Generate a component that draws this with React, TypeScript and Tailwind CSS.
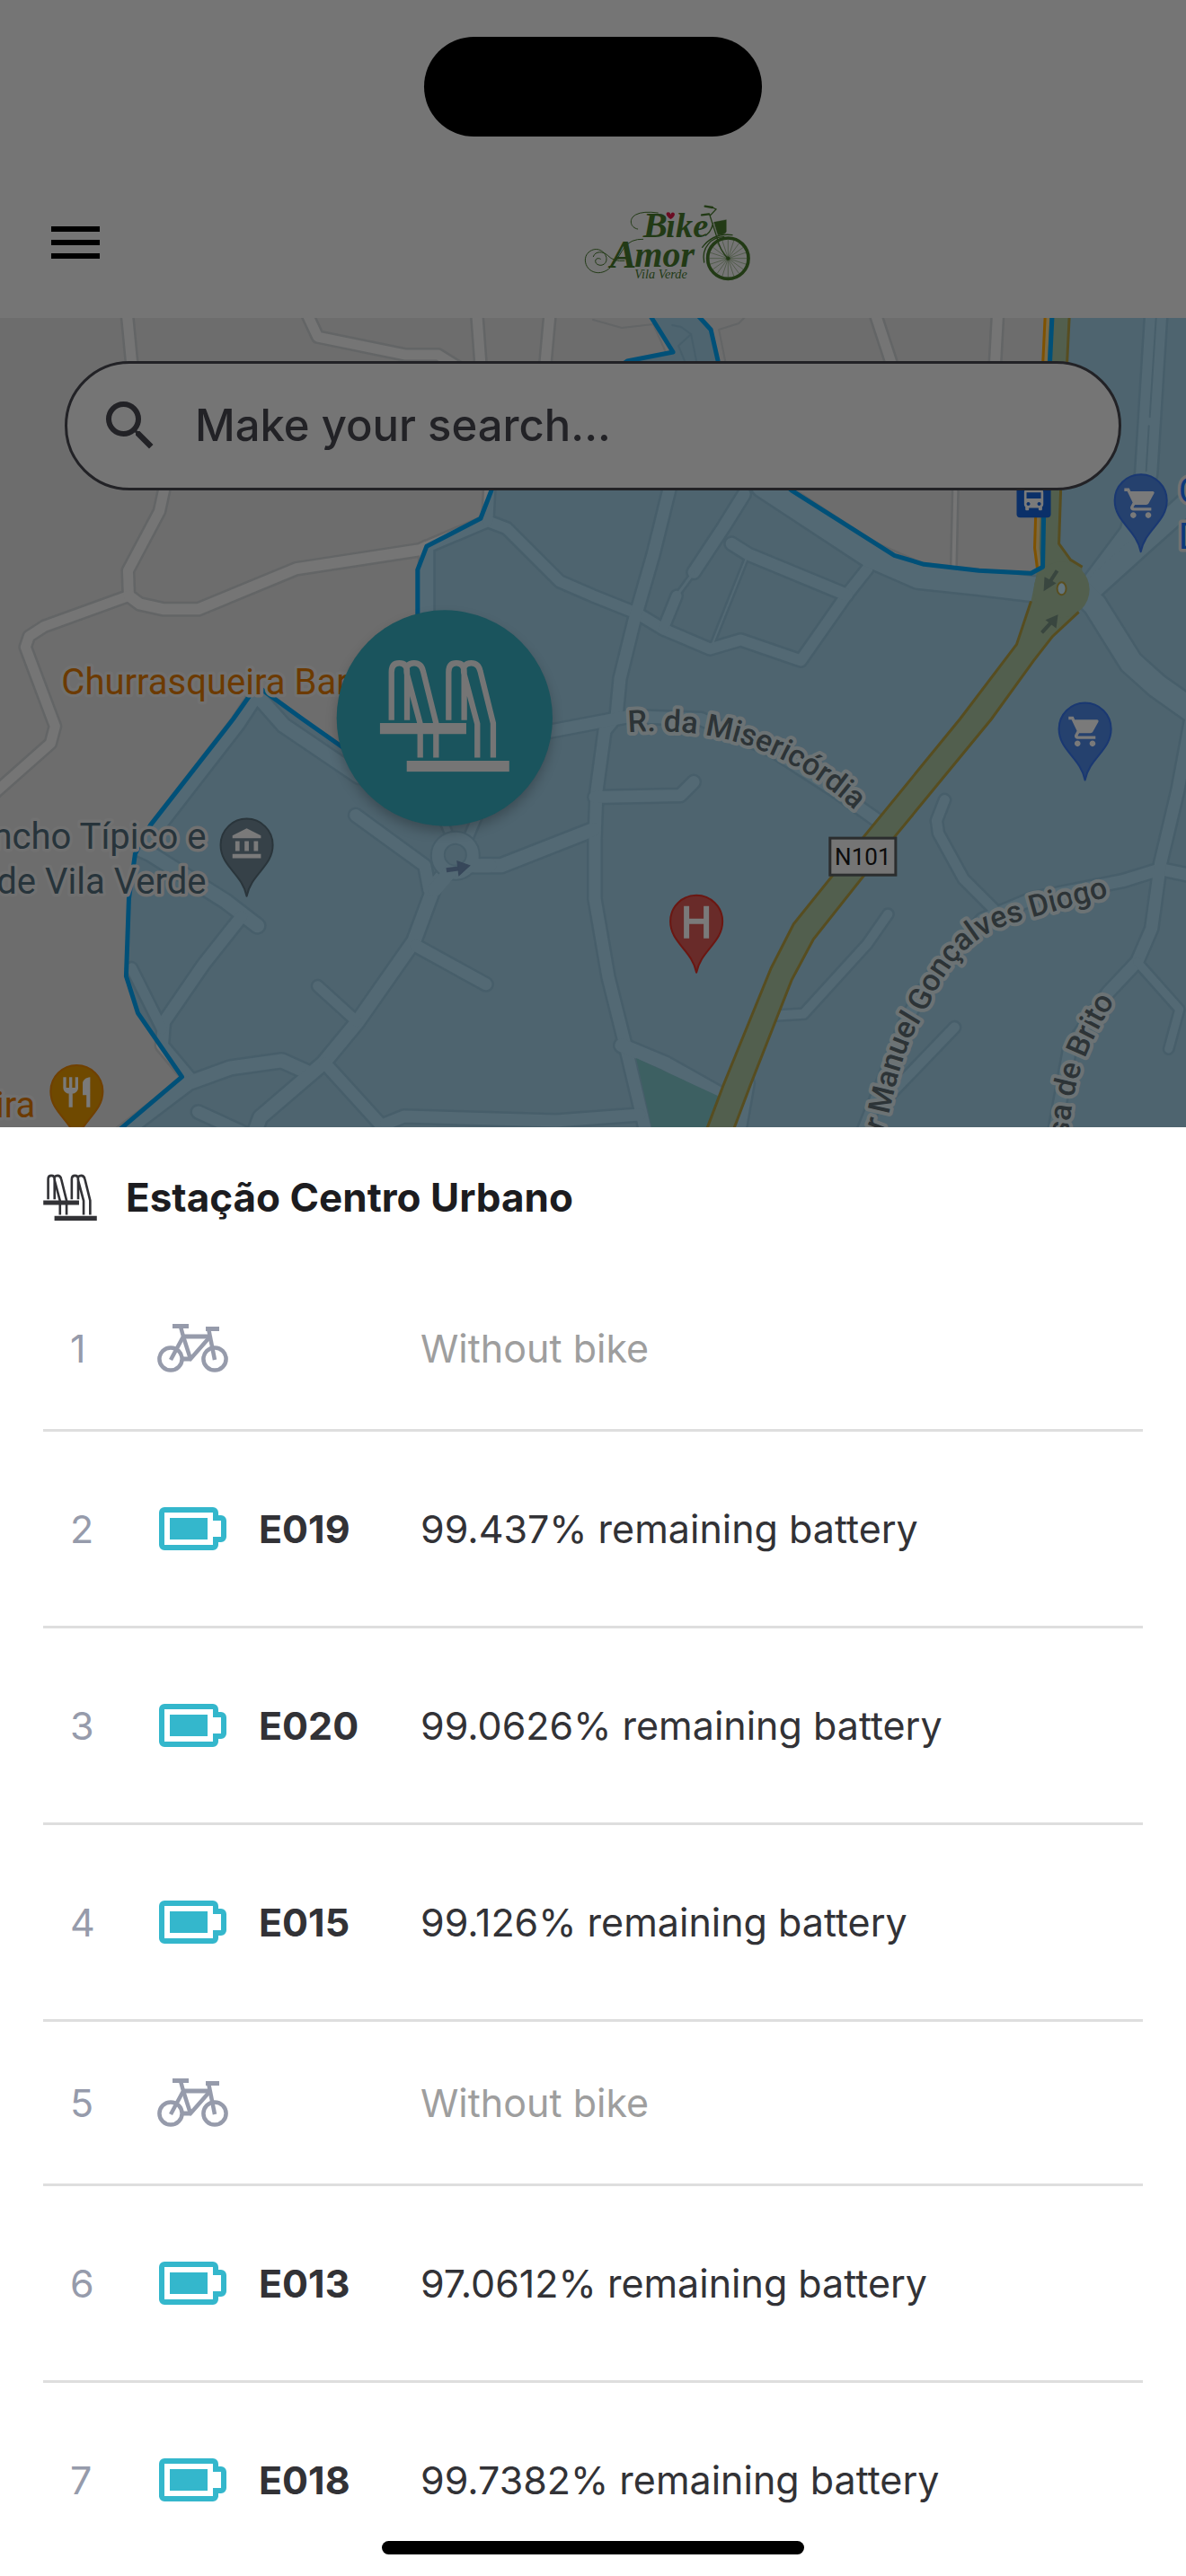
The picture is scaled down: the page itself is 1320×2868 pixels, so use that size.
import type { ReactNode } from 'react';
import { MdMenu, MdSearch, MdShoppingCart, MdRestaurant, MdAccountBalance, MdDirectionsBus } from 'react-icons/md';

type Slot = { id: number; bike?: string; battery?: string };

const slots: Slot[] = [
  { id: 1 },
  { id: 2, bike: 'E019', battery: '99.437' },
  { id: 3, bike: 'E020', battery: '99.0626' },
  { id: 4, bike: 'E015', battery: '99.126' },
  { id: 5 },
  { id: 6, bike: 'E013', battery: '97.0612' },
  { id: 7, bike: 'E018', battery: '99.7382' },
];

/* Streets as [outer width, path]. */
const streets: [number, string][] = [
  [16, 'M142 350L147 402L183 546L178 569L143 635L144 663L50 697L33 708L29 720L59 800L62 808L57 827L-5 882'],
  [17, 'M144 663L156 672L183 678H221L330 633L467 612L543 580L564 588L623 647L660 663L710 683L738 700L790 722L824 712L891 735L942 662L965 633'],
  [16, 'M545 540L543 580'],
  [20, 'M475 610V690'],
  [16, 'M340 345L354 375L452 395H488L520 415'],
  [16, 'M531 350L535 405'],
  [16, 'M612 350L607 405'],
  [16, 'M974 350L992 405'],
  [16, 'M1110 350L1107 405'],
  [9, 'M1063 540L1061 630'],
  [18, 'M746 540L727 617L706 690L690 755L686 797L673 813L664 880L662 933V1000L677 1087L696 1163L719 1260'],
  [32, 'M850 540L967 617L1022 641L1088 648L1155 656'],
  [18, 'M828 550L805 587L772 637'],
  [8, 'M772 637L753 663'],
  [16, 'M753 663L738 700'],
  [18, 'M814 605L833 617L942 662'],
  [7, 'M830 623L793 716'],
  [28, 'M1286 350L1275 527L1258 593L1215 650'],
  [28, 'M1325 556L1268 607L1215 655'],
  [30, 'M1200 655L1218 673L1258 737L1287 763L1325 790'],
  [20, 'M286 773L265 805L172 925L157 945L168 950L252 1003L287 1030'],
  [20, 'M286 773L316 807L400 864'],
  [18, 'M269 1020L227 1073L183 1137L181 1163L212 1200'],
  [16, 'M147 1077L181 1145'],
  [20, 'M135 1262L210 1205L257 1188L314 1180L345 1194'],
  [20, 'M505 960L484 985L461 1047L398 1137L360 1183L290 1243L283 1262'],
  [18, 'M396 907L473 963L478 990'],
  [20, 'M525 963H558L660 923'],
  [12, 'M488 900L503 935'],
  [14, 'M535 900L518 940'],
  [18, 'M463 1052L541 1095'],
  [16, 'M354 1097L398 1137'],
  [18, 'M362 1183L432 1260'],
  [18, 'M430 1250L450 1242L619 1247L712 1240'],
  [18, 'M221 1237L280 1264'],
  [18, 'M662 887L757 885L772 870'],
  [18, 'M600 816L700 797L780 800L860 835L930 880L978 914'],
  [16, 'M1051 890L1042 913L1044 927L1072 978L1106 1012'],
  [15, 'M988 1017L965 1050L894 1128L860 1130'],
  [16, 'M1062 1143L988 1220'],
  [18, 'M960 1260L984 1200L1009 1133L1039 1083L1093 1023L1148 1000L1249 980L1291 967L1325 974'],
  [18, 'M1325 800L1310 880L1291 960L1281 1033L1265 1070L1232 1105L1190 1167L1173 1260'],
  [14, 'M1265 1070L1312 1123L1300 1167'],
  [20, 'M692 1163L740 1183L806 1220'],
  [18, 'M832 1205L822 1262'],
];

const zone =
  'M547 546L560 500L698 402L749 392L719 344H770L791 367L799 402L840 510L881 546L995 618L1028 628L1089 635L1147 638L1160 631L1161 577L1168 402L1171 340H1340V1270H118L203 1198L154 1127L141 1086L144 1000L151 950L168 918L260 800L286 763L337 800L381 831L430 866L470 800L465 683V634L475 608L535 577Z';

const roadLeft = 'M1147 669L1131 717L1068 800L961 931L883 1028L858 1077L805 1207L785 1260';
const roadRight = 'M1200 681L1171 708L1150 735L1103 800L997 929L905 1045L881 1090L835 1207L815 1260';

function RackIcon({ className, x, y, width, height }: { className?: string; x?: number; y?: number; width?: number; height?: number }) {
  const hoop = 'M228 425V264Q228 234 254 234Q280 234 280 264V425M324 550V437L279 268Q274 234 304 234Q328 234 334 262L377 435V550';
  return (
    <svg className={className} x={x} y={y} width={width} height={height} viewBox="189 220 433 378" fill="none" stroke="currentColor" aria-hidden="true">
      <path d={hoop} strokeWidth="19" />
      <path d={hoop} strokeWidth="19" transform="translate(191 0)" />
      <path d="M189 453H478M279 579H622" strokeWidth="37" />
    </svg>
  );
}

function BikeIcon() {
  return (
    <svg className="h-14 w-20 text-[#969bab]" viewBox="0 0 80 56" fill="none" stroke="currentColor" strokeWidth="4.5" aria-hidden="true">
      <circle cx="16" cy="40" r="12.6" />
      <circle cx="65" cy="40" r="12.6" />
      <path d="M18 3.5H36M55 6.5H70" strokeWidth="5" />
      <path d="M27 4L30 15L16 41" strokeLinejoin="round" />
      <path d="M30 15L38 40L60 15" strokeLinejoin="round" />
      <path d="M29 15H61M28 40H39" strokeWidth="5" />
      <path d="M58 6L65 41" />
    </svg>
  );
}

function BatteryIcon() {
  return (
    <svg className="h-12 w-[75px] text-[#34b7cc]" viewBox="0 0 75 48" fill="none" aria-hidden="true">
      <path
        d="M3 6a3 3 0 0 1 3-3H60a3 3 0 0 1 3 3v6h6a3 3 0 0 1 3 3v18a3 3 0 0 1-3 3h-6v6a3 3 0 0 1-3 3H6a3 3 0 0 1-3-3Z"
        stroke="currentColor"
        strokeWidth="6"
      />
      <rect x="12" y="12" width="42" height="24" fill="currentColor" />
    </svg>
  );
}

function Logo() {
  const spokes = Array.from({ length: 20 }, (_, i) => (i * Math.PI) / 10);
  return (
    <svg className="h-[87px] w-[190px] text-[#223a15]" viewBox="90 80 570 261" fill="none" stroke="currentColor" strokeLinecap="round" role="img" aria-label="Bike Amor Vila Verde">
      <g fill="currentColor" stroke="none" className="font-['Liberation_Serif'] italic">
        <text x="290" y="192" fontSize="122" fontWeight="700">B</text>
        <text x="367" y="190" fontSize="115" fontWeight="700">ıke</text>
        <text x="180" y="292" fontSize="132" fontWeight="700">A</text>
        <text x="262" y="290" fontSize="120" fontWeight="700">mor</text>
        <text x="262" y="330" fontSize="43">Vila Verde</text>
      </g>
      <path d="M382 131C366 121 364 109 374 108Q381 108 382 115Q385 107 392 109C400 113 395 124 382 131Z" fill="#6b0b22" stroke="none" />
      <path d="M272 164C248 160 240 130 266 116Q290 103 340 110" strokeWidth="3" />
      <path d="M290 198Q250 196 228 225C205 258 185 310 140 310C98 308 86 262 108 242C135 218 166 240 168 262C170 284 145 292 133 278C126 264 140 258 148 264M124 256C130 236 158 238 172 252Q192 274 228 270" strokeWidth="3" />
      <circle cx="574" cy="262" r="68" strokeWidth="11" />
      <g strokeWidth="1.3">
        {spokes.map((a) => (
          <path key={a} d={`M574 262L${(574 + 62 * Math.cos(a)).toFixed(1)} ${(262 + 62 * Math.sin(a)).toFixed(1)}`} />
        ))}
      </g>
      <circle cx="574" cy="262" r="6" fill="currentColor" />
      <path d="M497 88L522 92M486 117L510 114" strokeWidth="7" />
      <path d="M522 92L534 98L515 118L510 114M513 118L536 190Q548 240 574 262M523 145Q520 170 500 185" strokeWidth="4" />
      <path d="M488 225Q525 176 588 184M494 275C484 225 520 190 560 190" strokeWidth="4" />
      <path d="M527 141L568 133V172Q566 182 540 184Z" fill="currentColor" />
    </svg>
  );
}

function Pin({ x, y, fill, edge, children }: { x: number; y: number; fill: string; edge: string; children: ReactNode }) {
  return (
    <g transform={`translate(${x} ${y})`}>
      <path d="M0 57C-5 32-29 24-29 0A29 29 0 0 1 29 0C29 24 5 32 0 57Z" fill={fill} stroke={edge} strokeWidth="2" strokeLinejoin="round" />
      <g color="#7a7a7a" fill="#7a7a7a">{children}</g>
    </g>
  );
}

function StationMap() {
  return (
    <svg className="block h-full w-full" viewBox="0 354 1320 900" preserveAspectRatio="xMidYMin slice" role="img" aria-label="Map of Vila Verde">
      <defs>
        <path id="misericordia" d="M699 815C790 808 870 830 946 897L990 936" />
        <path id="goncalves" d="M968 1295L988 1243C1000 1190 1010 1155 1028 1130C1050 1080 1075 1042 1127 1027Q1160 1017 1228 999L1300 980" />
        <path id="brito" d="M1184 1310L1190 1250C1195 1200 1207 1165 1250 1097L1270 1066" />
        <filter id="soft" x="-20%" y="-20%" width="140%" height="140%">
          <feGaussianBlur stdDeviation="7" />
        </filter>
      </defs>
      <rect x="-100" y="300" width="1600" height="1000" fill="#6d6d6d" />
      <g fill="none" strokeLinejoin="round" strokeLinecap="round">
        {streets.map(([w, d]) => (
          <path key={d} d={d} stroke="#636566" strokeWidth={w} />
        ))}
        {streets.map(([w, d]) => (
          <path key={d} d={d} stroke="#757575" strokeWidth={w - 5} />
        ))}
        <circle cx="507" cy="952" r="27" fill="#757575" stroke="#636566" strokeWidth="2" />
        <path d="M505 965L484 990M520 963H545" stroke="#757575" strokeWidth="15" />
        <circle cx="507" cy="951" r="12" fill="#6d6d6d" stroke="#636566" strokeWidth="2" />
        <path d="M660 356L692 365L727 361L740 390M748 362L758 364L769 372L775 402M755 385L769 372M755 385L762 402M807 402L800 367L822 360L830 352M1286 354L1279 464M1278 474L1275 524" stroke="#636566" strokeWidth="2" />
      </g>
      <path d="M708 1177L803 1221L785 1262H727Z" fill="#54675a" />
      <path d={zone} fill="rgb(20 83 114 / 0.35)" />

      <path
        d="M1163 344L1152 577L1151 610L1153 640L1147 669L1131 717L1068 800L961 931L883 1028L858 1077L805 1207L785 1260H815L835 1207L881 1090L905 1045L997 929L1103 800L1150 735L1171 708L1200 681L1204 631L1191 623L1178 605L1180 546L1190 344Z"
        fill="#525f4e"
      />
      <circle cx="1181" cy="656" r="31" fill="#525f4e" />
      <path d="M1165 344L1154 577L1153 610L1155 632" fill="none" stroke="#7b6a45" strokeWidth="6" />
      <path d="M1163 344L1152 577L1151 610L1154 632" fill="none" stroke="#7f5200" strokeWidth="3" />
      <g fill="none" stroke="#574d20" strokeWidth="3">
        <path d={roadLeft} />
        <path d={roadRight} />
        <path d="M1190 344L1180 546L1178 605L1191 623L1204 631" />
      </g>
      <path d={zone} fill="none" stroke="#005078" strokeWidth="5" strokeLinejoin="round" />
      <ellipse cx="1181" cy="655" rx="5" ry="7" fill="#63757d" stroke="#5a4f1f" strokeWidth="2" />
      <g stroke="#39463f" fill="#39463f" strokeWidth="4">
        <path d="M1176 635L1167 649" />
        <path d="M1161 658L1162 642L1175 649Z" stroke="none" />
        <path d="M1159 704L1169 693" />
        <path d="M1177 684L1175 699L1163 690Z" stroke="none" />
      </g>
      <g stroke="#37475a" fill="#37475a">
        <path d="M497 968L512 966" strokeWidth="5" />
        <path d="M523 963L509 958L511 974Z" />
      </g>

      <g className="font-['Roboto']" fontSize="40" strokeWidth="7" strokeLinejoin="round" paintOrder="stroke" stroke="#717171">
        <text x="69" y="773" fill="#6c3a00">Churrasqueira Bar</text>
        <text x="230" y="944" textAnchor="end" fill="#27343b">ncho Típico e</text>
        <text x="230" y="994" textAnchor="end" fill="#27343b">de Vila Verde</text>
        <text x="40" y="1243" textAnchor="end" fill="#6c3a00">ira</text>
        <text x="1311" y="560" fill="#0d3a7c">C</text>
        <text x="1311" y="611" fill="#0d3a7c">D</text>
      </g>
      <g className="font-['Roboto']" fontSize="34" fontWeight="500" fill="#2d3437" strokeWidth="8" strokeLinejoin="round" paintOrder="stroke" stroke="#6c7375">
        <text><textPath href="#misericordia">R. da Misericórdia</textPath></text>
        <text><textPath href="#goncalves" startOffset="38">r Manuel Gonçalves Diogo</textPath></text>
        <text><textPath href="#brito" startOffset="45">sa de Brito</textPath></text>
      </g>
      <rect x="923.5" y="932.5" width="73" height="41" fill="#757575" stroke="#2b2d2e" strokeWidth="3" />
      <text x="960" y="962" textAnchor="middle" fontSize="26" fill="#0c0c0c" className="font-['Roboto']">N101</text>

      <Pin x={275} y={940} fill="#364148" edge="#2a353b"><MdAccountBalance x={-19} y={-20} size={38} /></Pin>
      <Pin x={775} y={1025} fill="#692b29" edge="#6b1712"><path d="M-14 -17H-8V-3H8V-17H14V19H8V3H-8V19H-14Z" /></Pin>
      <Pin x={1269} y={557} fill="#25416e" edge="#1a3872"><MdShoppingCart x={-20} y={-17} size={40} /></Pin>
      <Pin x={1207} y={811} fill="#25416e" edge="#1a3872"><MdShoppingCart x={-20} y={-17} size={40} /></Pin>
      <Pin x={86} y={1214} fill="#6f4900" edge="#704000"><MdRestaurant x={-20} y={-19} size={40} /></Pin>
      <rect x="1131" y="536" width="38" height="40" rx="4" fill="#0b3069" />
      <MdDirectionsBus x={1134} y={540} size={32} color="#7a7a7a" />

      <circle cx="495" cy="806" r="119" fill="#000" opacity="0.25" filter="url(#soft)" />
      <circle cx="495" cy="799" r="120" fill="#1a545d" />
      <g color="#757575">
        <RackIcon x={423} y={733} width={144} height={126} />
      </g>
    </svg>
  );
}

function SlotRow({ slot }: { slot: Slot }) {
  const full = Boolean(slot.bike);
  return (
    <li className={`flex items-center border-b-[3px] border-[#dedede] pl-[30px] ${full ? 'h-[219px]' : 'h-[183px]'}`}>
      <span className="w-24 shrink-0 text-[#969bab]">{slot.id}</span>
      <span className={`flex w-[114px] shrink-0 ${full ? 'pl-[3px]' : ''}`}>{full ? <BatteryIcon /> : <BikeIcon />}</span>
      <span className="w-[180px] shrink-0 font-bold">{slot.bike}</span>
      <span className={full ? '' : 'text-[#9e9e9e]'}>{full ? `${slot.battery}% remaining battery` : 'Without bike'}</span>
    </li>
  );
}

export default function App() {
  return (
    <div className="relative flex h-screen flex-col overflow-hidden bg-white font-['Inter',sans-serif]">
      <header className="shrink-0 bg-[#757575]">
        <div className="flex h-[186px] justify-center pt-[41px]">
          <div className="h-[111px] w-[376px] rounded-full bg-black" />
        </div>
        <div className="flex h-[168px] items-center">
          <button type="button" aria-label="Open menu" className="flex w-[168px] shrink-0 pl-12 text-black">
            <MdMenu size={72} />
          </button>
          <div className="flex flex-1 justify-center">
            <Logo />
          </div>
        </div>
      </header>

      <section className="relative h-[901px] shrink-0 overflow-hidden bg-[#6d6d6d]">
        <StationMap />
        <label className="absolute inset-x-[72px] top-12 flex h-36 items-center gap-9 rounded-full border-[3px] border-[#222226] bg-[#757575] px-[34px] text-[#222226]">
          <MdSearch size={72} className="shrink-0" />
          <input
            type="text"
            aria-label="Make your search"
            placeholder="Make your search..."
            className="min-w-0 flex-1 bg-transparent text-[49px] font-medium outline-none placeholder:text-[#222226]"
          />
        </label>
      </section>

      <section className="min-h-0 flex-1 overflow-y-auto bg-white px-12 text-[43px] text-[#323236] [scrollbar-width:none]">
        <h1 className="flex h-[156px] items-center gap-8 text-[44px] font-bold text-[#1c1c20]">
          <RackIcon className="h-[52px] w-[60px] shrink-0 text-[#323236]" />
          Estação Centro Urbano
        </h1>
        <ul>
          {slots.map((slot) => (
            <SlotRow key={slot.id} slot={slot} />
          ))}
        </ul>
      </section>

      <div className="absolute bottom-6 left-1/2 h-[15px] w-[470px] -translate-x-1/2 rounded-full bg-black" />
    </div>
  );
}
